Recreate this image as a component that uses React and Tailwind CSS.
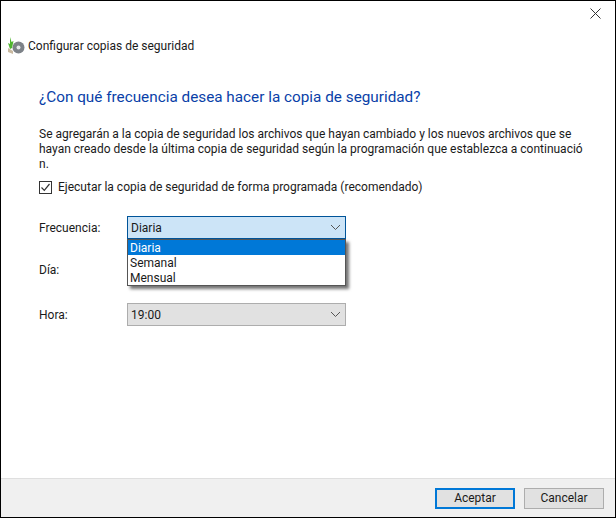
function BackupIcon() {
    return (
        <svg width="18" height="18" viewBox="0 0 18 18" className="shrink-0">
            <circle cx="11.5" cy="10.5" r="6" fill="#7d8288" />
            <circle cx="11.5" cy="10.5" r="2" fill="#e6e8ea" />
            <path d="M1 11 L6 14 L6 17 L1 15 Z" fill="#c9b9a0" />
            <path d="M3 0 L4.5 5 L6.5 4 L5 11 L3 12 L1 6 L3 7 Z" fill="#4fb52f" />
        </svg>
    );
}

function Chevron() {
    return (
        <svg width="11" height="7" viewBox="0 0 11 7" fill="none" stroke="#555" strokeWidth="1">
            <path d="M1 1 L5.5 5.5 L10 1" />
        </svg>
    );
}

function Select({ value, active }) {
    return (
        <div
            className={`w-[219px] h-[23px] flex items-center justify-between pl-[3px] pr-[4px] border ${
                active ? 'bg-[#cce4f7] border-[#005499]' : 'bg-[#e1e1e1] border-[#adadad]'
            }`}
        >
            <span>{value}</span>
            <Chevron />
        </div>
    );
}

export default function App() {
    return (
        <div className="w-[616px] h-[518px] flex flex-col bg-white border border-black text-[12px] leading-[16px] text-[#1a1a1a] font-['Roboto',sans-serif] overflow-hidden">
            <div className="flex justify-end h-[36px] pt-[7px] pr-[14px]">
                <svg width="11" height="11" viewBox="0 0 11 11" stroke="#333" strokeWidth="1">
                    <path d="M0.5 0.5 L10.5 10.5 M10.5 0.5 L0.5 10.5" />
                </svg>
            </div>

            <div className="flex items-center gap-[3px] pl-[6px] h-[18px]">
                <BackupIcon />
                <span>Configurar copias de seguridad</span>
            </div>

            <div className="flex-1 pl-[38px] pr-[20px]">
                <h1 className="mt-[31px] text-[15.3px] leading-[22px] text-[#0a3fa8]">
                    ¿Con qué frecuencia desea hacer la copia de seguridad?
                </h1>

                <p className="mt-[19px] leading-[15px] whitespace-nowrap">
                    Se agregarán a la copia de seguridad los archivos que hayan cambiado y los nuevos archivos que se
                    <br />
                    hayan creado desde la última copia de seguridad según la programación que establezca a continuació
                    <br />
                    n.
                </p>

                <label className="mt-[6px] flex items-center gap-[6px] h-[18px]">
                    <span className="w-[13px] h-[13px] border border-[#333] flex items-center justify-center bg-white">
                        <svg width="11" height="11" viewBox="0 0 11 11" fill="none" stroke="#333" strokeWidth="1.2">
                            <path d="M1.5 5.5 L4.3 8.3 L9.5 2" />
                        </svg>
                    </span>
                    <span>Ejecutar la copia de seguridad de forma programada (recomendado)</span>
                </label>

                <div className="mt-[20px] flex items-center relative">
                    <span className="w-[88px]">Frecuencia:</span>
                    <Select value="Diaria" active />
                    <div className="absolute left-[88px] top-[23px] w-[219px] bg-white border border-[#555] shadow-[3px_3px_3px_rgba(0,0,0,0.55)] z-10">
                        <div className="h-[15px] leading-[17px] pl-[2px] bg-[#0078d7] text-white">Diaria</div>
                        <div className="h-[15px] leading-[16px] pl-[2px]">Semanal</div>
                        <div className="h-[15px] leading-[16px] pl-[2px]">Mensual</div>
                    </div>
                </div>

                <div className="mt-[19px] flex items-center h-[23px]">
                    <span className="w-[88px]">Día:</span>
                </div>

                <div className="mt-[22px] flex items-center">
                    <span className="w-[88px]">Hora:</span>
                    <Select value="19:00" />
                </div>
            </div>

            <div className="h-[39px] bg-[#f0f0f0] border-t border-[#dfdfdf] flex items-center justify-end gap-[9px] pr-[11px]">
                <button className="w-[80px] h-[21px] bg-[#e1e1e1] border-2 border-[#0078d7]">Aceptar</button>
                <button className="w-[80px] h-[21px] bg-[#e1e1e1] border border-[#adadad]">Cancelar</button>
            </div>
        </div>
    );
}
